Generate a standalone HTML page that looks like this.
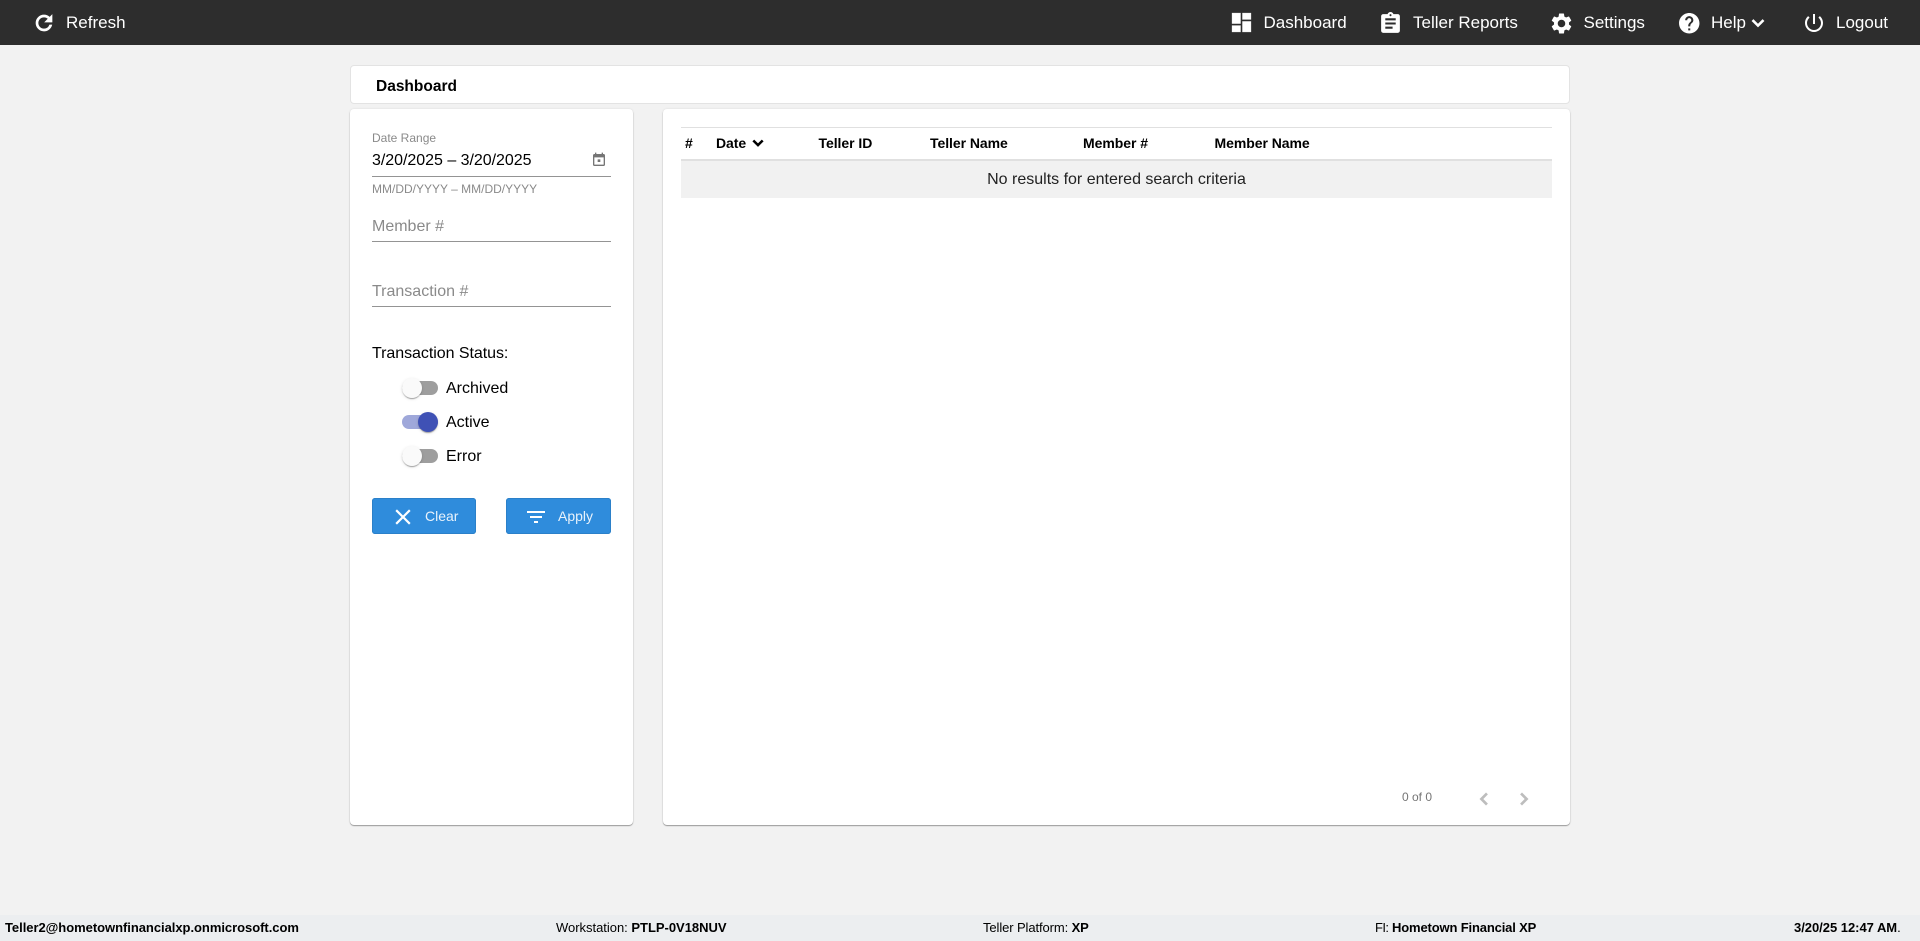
<!DOCTYPE html>
<html><head><meta charset="utf-8"><title>Dashboard</title>
<style>
html,body{margin:0;padding:0;width:1920px;height:941px;overflow:hidden;background:#f2f2f2;font-family:"Liberation Sans",Arial,sans-serif;color:#000}
.a{position:absolute;white-space:nowrap}
.t{position:absolute;white-space:nowrap;line-height:20px;height:20px}
svg{position:absolute;display:block}
.nav{color:#fff;font-size:17px}
.card{position:absolute;background:#fff;border-radius:4px;box-shadow:0 1px 1px rgba(0,0,0,.35),0 0 2px rgba(0,0,0,.1)}
.line{position:absolute;background:#949494;height:1px;left:372px;width:239px}
.track{position:absolute;left:402px;width:36px;height:14px;border-radius:7px;background:#9e9e9e}
.knob{position:absolute;width:20px;height:20px;border-radius:50%;background:#fafafa;box-shadow:0 2px 1px -1px rgba(0,0,0,.2),0 1px 1px rgba(0,0,0,.14),0 1px 3px rgba(0,0,0,.12)}
.btn{position:absolute;top:498px;height:36px;background:#2f8cdc;border-radius:3px;box-shadow:0 0 0 1px #2b80c9 inset}
.th{font-weight:bold;font-size:14px;letter-spacing:-.05px}
.ft{font-size:13px}
.ft b{font-weight:bold}
</style></head>
<body>
<div class="a" style="left:0;top:0;width:1920px;height:45px;background:#2d2d2d"></div>

<svg style="left:32px;top:11px" width="24" height="24" viewBox="0 0 24 24" fill="#fff" stroke="#fff" stroke-width=".7"><path d="M17.65 6.35C16.2 4.9 14.21 4 12 4c-4.42 0-7.99 3.58-7.99 8s3.57 8 7.99 8c3.73 0 6.84-2.55 7.73-6h-2.08c-.82 2.33-3.04 4-5.65 4-3.31 0-6-2.69-6-6s2.69-6 6-6c1.66 0 3.14.69 4.22 1.78L13 11h7V4l-2.35 2.35z"/></svg>
<div class="t nav" style="left:66px;top:12.5px">Refresh</div>

<svg style="left:1229px;top:10px" width="25" height="25" viewBox="0 0 24 24" fill="#fff" stroke="#fff" stroke-width=".5"><path d="M3 13h8V3H3v10zm0 8h8v-6H3v6zm10 0h8V11h-8v10zm0-18v6h8V3h-8z"/></svg>
<div class="t nav" style="left:1263.5px;top:12.5px">Dashboard</div>
<svg style="left:1378.2px;top:11px" width="25" height="25" viewBox="0 0 24 24" fill="#fff"><path d="M19 3h-4.18C14.4 1.84 13.3 1 12 1c-1.3 0-2.4.84-2.82 2H5c-1.1 0-2 .9-2 2v14c0 1.1.9 2 2 2h14c1.1 0 2-.9 2-2V5c0-1.1-.9-2-2-2zm-7 0c.55 0 1 .45 1 1s-.45 1-1 1-1-.45-1-1 .45-1 1-1zm2 14H7v-2h7v2zm3-4H7v-2h10v2zm0-4H7V7h10v2z"/></svg>
<div class="t nav" style="left:1413px;top:12.5px">Teller Reports</div>
<svg style="left:1548.5px;top:10.5px" width="25" height="25" viewBox="0 0 24 24" fill="#fff"><path d="M19.14 12.94c.04-.3.06-.61.06-.94 0-.32-.02-.64-.07-.94l2.03-1.58c.18-.14.23-.41.12-.61l-1.92-3.32c-.12-.22-.37-.29-.59-.22l-2.39.96c-.5-.38-1.03-.7-1.62-.94l-.36-2.54c-.04-.24-.24-.41-.48-.41h-3.84c-.24 0-.43.17-.47.41l-.36 2.54c-.59.24-1.13.57-1.62.94l-2.39-.96c-.22-.08-.47 0-.59.22L2.74 8.87c-.12.21-.08.47.12.61l2.03 1.58c-.05.3-.09.63-.09.94s.02.64.07.94l-2.03 1.58c-.18.14-.23.41-.12.61l1.92 3.32c.12.22.37.29.59.22l2.39-.96c.5.38 1.03.7 1.62.94l.36 2.54c.05.24.24.41.48.41h3.84c.24 0 .44-.17.47-.41l.36-2.54c.59-.24 1.13-.56 1.62-.94l2.39.96c.22.08.47 0 .59-.22l1.92-3.32c.12-.22.07-.47-.12-.61l-2.01-1.58zM12 15.6c-1.98 0-3.6-1.62-3.6-3.6s1.62-3.6 3.6-3.6 3.6 1.62 3.6 3.6-1.62 3.6-3.6 3.6z"/></svg>
<div class="t nav" style="left:1583.5px;top:12.5px">Settings</div>
<svg style="left:1677px;top:10.5px" width="24.5" height="24.5" viewBox="0 0 24 24" fill="#fff"><path d="M12 2C6.48 2 2 6.48 2 12s4.48 10 10 10 10-4.48 10-10S17.52 2 12 2zm1 17h-2v-2h2v2zm2.07-7.75l-.9.92C13.45 12.9 13 13.5 13 15h-2v-.5c0-1.1.45-2.1 1.17-2.83l1.24-1.26c.37-.36.59-.86.59-1.41 0-1.1-.9-2-2-2s-2 .9-2 2H8c0-2.21 1.79-4 4-4s4 1.79 4 4c0 .88-.36 1.68-.93 2.25z"/></svg>
<div class="t nav" style="left:1711px;top:12.5px">Help</div>
<svg style="left:1745.5px;top:11px" width="24" height="24" viewBox="0 0 24 24" fill="#fff"><path d="M16.59 8.59L12 13.17 7.41 8.59 6 10l6 6 6-6z" stroke="#fff" stroke-width=".6"/></svg>
<svg style="left:1802px;top:11px" width="24" height="24" viewBox="0 0 24 24" fill="#fff"><path d="M13 3h-2v10h2V3zm4.83 2.17l-1.42 1.42C17.99 7.86 19 9.81 19 12c0 3.87-3.13 7-7 7s-7-3.13-7-7c0-2.19 1.01-4.14 2.58-5.42L6.17 5.17C4.23 6.82 3 9.26 3 12c0 4.97 4.03 9 9 9s9-4.03 9-9c0-2.74-1.23-5.18-3.17-6.83z"/></svg>
<div class="t nav" style="left:1836px;top:12.5px">Logout</div>

<!-- title card -->
<div class="a" style="left:350px;top:65px;width:1218px;height:37px;background:#fff;border:1px solid #e3e3e3;border-radius:4px"></div>
<div class="t" style="left:376px;top:77px;font-size:15.5px;font-weight:bold">Dashboard</div>

<!-- left card -->
<div class="card" style="left:350px;top:109px;width:283px;height:716px"></div>
<div class="t" style="left:372px;top:128px;font-size:12px;color:#8a8a8a">Date Range</div>
<div class="t" style="left:372px;top:151px;font-size:16px;color:#000;letter-spacing:-.03px">3/20/2025 – 3/20/2025</div>
<svg style="left:590.5px;top:152px" width="16" height="16" viewBox="0 0 24 24" fill="#757575"><path d="M19 3h-1V1h-2v2H8V1H6v2H5c-1.11 0-1.99.9-1.99 2L3 19c0 1.1.89 2 2 2h14c1.1 0 2-.9 2-2V5c0-1.1-.9-2-2-2zm0 16H5V8h14v11zM10 11h4v4h-4z"/></svg>
<div class="line" style="top:176px"></div>
<div class="t" style="left:372px;top:179px;font-size:12px;color:#8a8a8a">MM/DD/YYYY – MM/DD/YYYY</div>
<div class="t" style="left:372px;top:217px;font-size:16px;color:#8a8a8a">Member #</div>
<div class="line" style="top:241px"></div>
<div class="t" style="left:372px;top:282px;font-size:16px;color:#8a8a8a">Transaction #</div>
<div class="line" style="top:306px"></div>

<div class="t" style="left:372px;top:344px;font-size:16px;letter-spacing:-.05px">Transaction Status:</div>

<div class="track" style="top:381px"></div><div class="knob" style="left:402px;top:378px"></div>
<div class="t" style="left:446px;top:378.5px;font-size:16px">Archived</div>
<div class="track" style="top:415px;background:#9fa8da"></div><div class="knob" style="left:418px;top:412px;background:#3f51b5"></div>
<div class="t" style="left:446px;top:412.5px;font-size:16px">Active</div>
<div class="track" style="top:449px"></div><div class="knob" style="left:402px;top:446px"></div>
<div class="t" style="left:446px;top:446.5px;font-size:16px">Error</div>

<div class="btn" style="left:372px;width:104px"></div>
<svg style="left:389.5px;top:503.5px" width="26" height="26" viewBox="0 0 24 24" fill="#fff"><path d="M19 6.41L17.59 5 12 10.59 6.41 5 5 6.41 10.59 12 5 17.59 6.41 19 12 13.41 17.59 19 19 17.59 13.41 12z"/></svg>
<div class="t" style="left:425px;top:505.5px;font-size:14px;color:#e8f2fb">Clear</div>
<div class="btn" style="left:506px;width:105px"></div>
<svg style="left:524px;top:504.5px" width="24" height="24" viewBox="0 0 24 24" fill="#fff"><path d="M10 18h4v-2h-4v2zM3 6v2h18V6H3zm3 7h12v-2H6v2z"/></svg>
<div class="t" style="left:558px;top:505.5px;font-size:14px;color:#e8f2fb">Apply</div>

<!-- right card -->
<div class="card" style="left:663px;top:109px;width:907px;height:716px"></div>
<div class="a" style="left:681px;top:127px;width:871px;height:1px;background:#e0e0e0"></div>
<div class="t th" style="left:685px;top:133px">#</div>
<div class="t th" style="left:716px;top:133px">Date</div>
<svg style="left:747.5px;top:133px" width="20" height="20" viewBox="0 0 24 24" fill="#000"><path d="M16.59 8.59L12 13.17 7.41 8.59 6 10l6 6 6-6z" stroke="#000" stroke-width="1"/></svg>
<div class="t th" style="left:818.5px;top:133px">Teller ID</div>
<div class="t th" style="left:930px;top:133px">Teller Name</div>
<div class="t th" style="left:1083px;top:133px">Member #</div>
<div class="t th" style="left:1214.5px;top:133px">Member Name</div>
<div class="a" style="left:681px;top:159px;width:871px;height:2px;background:#e0e0e0"></div>
<div class="a" style="left:681px;top:161px;width:871px;height:37px;background:#f1f1f1"></div>
<div class="t" style="left:681px;top:169.5px;width:871px;text-align:center;font-size:16px;color:#222">No results for entered search criteria</div>

<div class="t" style="left:1402px;top:787px;font-size:12px;color:#757575">0 of 0</div>
<svg style="left:1472px;top:787px" width="24" height="24" viewBox="0 0 24 24" fill="#bdbdbd" stroke="#bdbdbd" stroke-width=".7"><path d="M15.41 7.41L14 6l-6 6 6 6 1.41-1.41L10.83 12z"/></svg>
<svg style="left:1512px;top:787px" width="24" height="24" viewBox="0 0 24 24" fill="#bdbdbd" stroke="#bdbdbd" stroke-width=".7"><path d="M10 6L8.59 7.41 13.17 12l-4.58 4.58L10 18l6-6z"/></svg>

<!-- footer -->
<div class="a" style="left:0;top:915px;width:1920px;height:26px;background:#eceef0"></div>
<div class="t ft" style="left:5px;top:918px;letter-spacing:-.04px"><b>Teller2@hometownfinancialxp.onmicrosoft.com</b></div>
<div class="t ft" style="left:556px;top:918px;letter-spacing:-.02px">Workstation: <b>PTLP-0V18NUV</b></div>
<div class="t ft" style="left:983px;top:918px;letter-spacing:-.1px">Teller Platform: <b>XP</b></div>
<div class="t ft" style="left:1375px;top:918px;letter-spacing:-.6px">FI:</div>
<div class="t ft" style="left:1392px;top:918px;letter-spacing:-.15px"><b>Hometown Financial XP</b></div>
<div class="t ft" style="left:1794px;top:918px;letter-spacing:-.03px"><b>3/20/25 12:47 AM</b>.</div>
</body></html>
